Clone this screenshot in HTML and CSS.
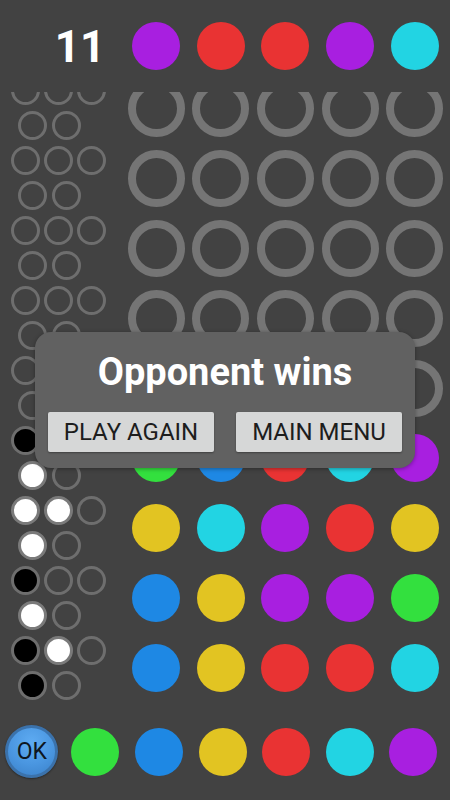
FILE: index.html
```html
<!DOCTYPE html>
<html>
<head>
<meta charset="utf-8">
<link rel="stylesheet" href="styles.css">
</head>
<body>
<div class="app">
  <div class="top">
    <div class="count">11</div>
    <div class="cell"><span class="dot purple"></span></div>
    <div class="cell"><span class="dot red"></span></div>
    <div class="cell"><span class="dot red"></span></div>
    <div class="cell"><span class="dot purple"></span></div>
    <div class="cell"><span class="dot cyan"></span></div>
  </div>

  <div class="board">
    <div class="rows">
      <div class="row">
        <div class="fb"><div class="fb-top"><span class="peg"></span><span class="peg"></span><span class="peg"></span></div><div class="fb-bot"><span class="peg"></span><span class="peg"></span></div></div>
        <div class="cell"><span class="ring"></span></div><div class="cell"><span class="ring"></span></div><div class="cell"><span class="ring"></span></div><div class="cell"><span class="ring"></span></div><div class="cell"><span class="ring"></span></div>
      </div>
      <div class="row">
        <div class="fb"><div class="fb-top"><span class="peg"></span><span class="peg"></span><span class="peg"></span></div><div class="fb-bot"><span class="peg"></span><span class="peg"></span></div></div>
        <div class="cell"><span class="ring"></span></div><div class="cell"><span class="ring"></span></div><div class="cell"><span class="ring"></span></div><div class="cell"><span class="ring"></span></div><div class="cell"><span class="ring"></span></div>
      </div>
      <div class="row">
        <div class="fb"><div class="fb-top"><span class="peg"></span><span class="peg"></span><span class="peg"></span></div><div class="fb-bot"><span class="peg"></span><span class="peg"></span></div></div>
        <div class="cell"><span class="ring"></span></div><div class="cell"><span class="ring"></span></div><div class="cell"><span class="ring"></span></div><div class="cell"><span class="ring"></span></div><div class="cell"><span class="ring"></span></div>
      </div>
      <div class="row">
        <div class="fb"><div class="fb-top"><span class="peg"></span><span class="peg"></span><span class="peg"></span></div><div class="fb-bot"><span class="peg"></span><span class="peg"></span></div></div>
        <div class="cell"><span class="ring"></span></div><div class="cell"><span class="ring"></span></div><div class="cell"><span class="ring"></span></div><div class="cell"><span class="ring"></span></div><div class="cell"><span class="ring"></span></div>
      </div>
      <div class="row">
        <div class="fb"><div class="fb-top"><span class="peg"></span><span class="peg"></span><span class="peg"></span></div><div class="fb-bot"><span class="peg"></span><span class="peg"></span></div></div>
        <div class="cell"><span class="ring"></span></div><div class="cell"><span class="ring"></span></div><div class="cell"><span class="ring"></span></div><div class="cell"><span class="ring"></span></div><div class="cell"><span class="ring"></span></div>
      </div>
      <div class="row">
        <div class="fb"><div class="fb-top"><span class="peg b"></span><span class="peg"></span><span class="peg"></span></div><div class="fb-bot"><span class="peg w"></span><span class="peg"></span></div></div>
        <div class="cell"><span class="dot green"></span></div><div class="cell"><span class="dot blue"></span></div><div class="cell"><span class="dot red"></span></div><div class="cell"><span class="dot cyan"></span></div><div class="cell"><span class="dot purple"></span></div>
      </div>
      <div class="row">
        <div class="fb"><div class="fb-top"><span class="peg w"></span><span class="peg w"></span><span class="peg"></span></div><div class="fb-bot"><span class="peg w"></span><span class="peg"></span></div></div>
        <div class="cell"><span class="dot yellow"></span></div><div class="cell"><span class="dot cyan"></span></div><div class="cell"><span class="dot purple"></span></div><div class="cell"><span class="dot red"></span></div><div class="cell"><span class="dot yellow"></span></div>
      </div>
      <div class="row">
        <div class="fb"><div class="fb-top"><span class="peg b"></span><span class="peg"></span><span class="peg"></span></div><div class="fb-bot"><span class="peg w"></span><span class="peg"></span></div></div>
        <div class="cell"><span class="dot blue"></span></div><div class="cell"><span class="dot yellow"></span></div><div class="cell"><span class="dot purple"></span></div><div class="cell"><span class="dot purple"></span></div><div class="cell"><span class="dot green"></span></div>
      </div>
      <div class="row">
        <div class="fb"><div class="fb-top"><span class="peg b"></span><span class="peg w"></span><span class="peg"></span></div><div class="fb-bot"><span class="peg b"></span><span class="peg"></span></div></div>
        <div class="cell"><span class="dot blue"></span></div><div class="cell"><span class="dot yellow"></span></div><div class="cell"><span class="dot red"></span></div><div class="cell"><span class="dot red"></span></div><div class="cell"><span class="dot cyan"></span></div>
      </div>
    </div>
  </div>

  <div class="bottom">
    <div class="pcell"><button class="ok">OK</button></div>
    <div class="pcell"><span class="dot green"></span></div>
    <div class="pcell"><span class="dot blue"></span></div>
    <div class="pcell"><span class="dot yellow"></span></div>
    <div class="pcell"><span class="dot red"></span></div>
    <div class="pcell"><span class="dot cyan"></span></div>
    <div class="pcell"><span class="dot purple"></span></div>
  </div>

  <div class="dialog">
    <div class="title">Opponent wins</div>
    <div class="actions">
      <button class="btn">PLAY AGAIN</button>
      <button class="btn">MAIN MENU</button>
    </div>
  </div>
</div>
</body>
</html>
```

FILE: styles.css
```css
html, body {
  margin: 0;
  padding: 0;
  background: #424242;
}
body {
  font-family: Roboto, "Liberation Sans", sans-serif;
  width: 450px;
  height: 800px;
  overflow: hidden;
}
.app {
  position: relative;
  width: 450px;
  height: 800px;
}
.top {
  display: flex;
  align-items: center;
  height: 92px;
}
.count {
  box-sizing: border-box;
  width: 124px;
  padding-left: 36px;
  text-align: center;
  color: #ffffff;
  font-weight: 700;
  font-size: 44px;
  line-height: 50px;
  margin-top: 2px;
}
.cell {
  width: 64.6px;
  height: 70px;
  display: flex;
  align-items: center;
  justify-content: center;
}
.dot {
  display: block;
  width: 48px;
  height: 48px;
  border-radius: 50%;
}
.purple { background: #a81fe0; }
.red { background: #e93333; }
.cyan { background: #22d4e3; }
.green { background: #33e03e; }
.blue { background: #1e88e4; }
.yellow { background: #e2c422; }
.ring {
  display: block;
  box-sizing: border-box;
  width: 57px;
  height: 57px;
  border-radius: 50%;
  border: 8px solid #757575;
}
.board {
  height: 611px;
  overflow: hidden;
}
.rows {
  margin-top: -19px;
}
.row {
  display: flex;
  height: 70px;
}
.fb {
  width: 124px;
  display: flex;
  flex-direction: column;
}
.fb-top {
  display: flex;
  gap: 4px;
  padding-left: 10.5px;
  margin-top: 3px;
}
.fb-bot {
  display: flex;
  gap: 4.5px;
  padding-left: 18px;
  margin-top: 6px;
}
.peg {
  display: block;
  box-sizing: border-box;
  width: 29px;
  height: 29px;
  border-radius: 50%;
  border: 3px solid #6e6e6e;
}
.peg.b { background: #000000; }
.peg.w { background: #ffffff; border-color: #7a7a7a; }
.bottom {
  display: flex;
  align-items: center;
  height: 97px;
}
.pcell {
  width: 63.6px;
  display: flex;
  align-items: center;
  justify-content: center;
}
.ok {
  box-sizing: border-box;
  width: 53px;
  height: 53px;
  border-radius: 50%;
  border: 3px solid #3b72ab;
  background: radial-gradient(circle at 50% 30%, #5eabf2 0%, #4a96e0 55%, #3a80c8 100%);
  box-shadow: 0 1px 2px rgba(0,0,0,0.4);
  color: #0e1620;
  font-family: Roboto, "Liberation Sans", sans-serif;
  font-size: 23px;
  padding: 0;
  line-height: 47px;
  text-align: center;
}
.dialog {
  position: absolute;
  left: 35px;
  top: 332px;
  width: 380px;
  height: 136px;
  box-sizing: border-box;
  border-radius: 16px;
  background: #616161;
  box-shadow: 0 1px 4px rgba(0,0,0,0.35);
  padding-top: 18px;
}
.title {
  text-align: center;
  color: #ffffff;
  font-weight: 700;
  font-size: 38px;
  line-height: 44px;
}
.actions {
  display: flex;
  gap: 22px;
  padding: 0 13px;
  margin-top: 18px;
}
.btn {
  width: 166px;
  height: 40px;
  border: none;
  border-radius: 2px;
  background: #d6d7d7;
  color: #1d1d1d;
  font-family: Roboto, "Liberation Sans", sans-serif;
  font-size: 24px;
  line-height: 40px;
  padding: 0;
  box-shadow: 0 1px 2px rgba(0,0,0,0.35);
}
```
